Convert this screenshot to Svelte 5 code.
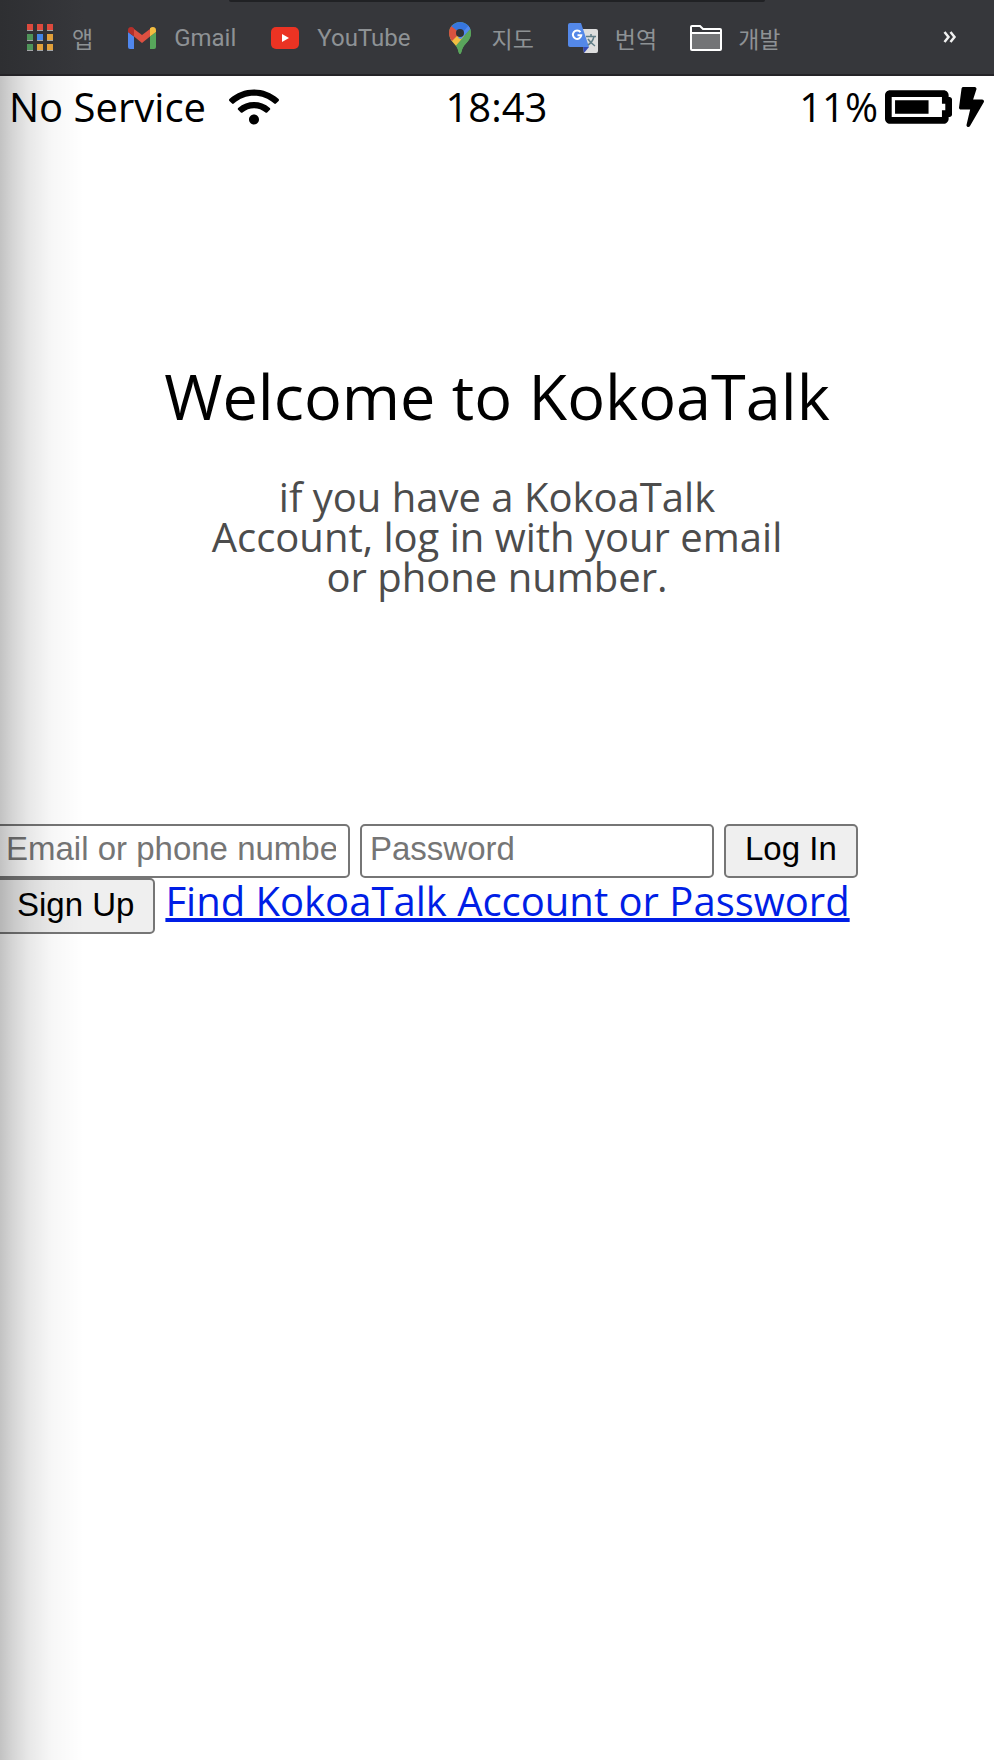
<script>
  let account = $state('');
  let password = $state('');
  const dots = [
    [0, 0, '#dc4a3d'], [10, 0, '#dc4a3d'], [20, 0, '#dc4a3d'],
    [0, 10, '#4f9459'], [10, 10, '#4386e8'], [20, 10, '#e2a03a'],
    [0, 20, '#4f9459'], [10, 20, '#e2a03a'], [20, 20, '#e2a03a']
  ];
</script>

<div class="screen">
  <nav class="bookmarks" aria-label="Bookmarks">
    <span class="tab-edge"></span>
    <a href="#apps">
      <svg viewBox="0 0 32 32" aria-hidden="true">
        {#each dots as [x, y, color]}
          <rect x={x + 3} y={y + 2} width="6" height="7" fill="#a3a5a8" />
          <rect x={x + 3} y={y + 2} width="6" height="6" fill={color} />
        {/each}
      </svg>
      <span class="ko">앱</span>
    </a>
    <a href="#gmail">
      <svg viewBox="0 0 32 32" aria-hidden="true">
        <path fill="#5087ee" d="M2 10 8 14.500V27H4a2 2 0 0 1-2-2z" />
        <path fill="#57a65b" d="M24 14.500 30 10V25a2 2 0 0 1-2 2h-4z" />
        <path fill="#dc5041" d="M8 7 16 13 24 7V14.500L16 21 8 14.500z" />
        <path fill="#b5302b" d="M2 10V8.200C2 5 5.500 4 8 6.200V14.500z" />
        <path fill="#f4bd40" d="M24 6.200C26.500 4 30 5 30 8.200V10l-6 4.500z" />
      </svg>
      <span>Gmail</span>
    </a>
    <a href="#youtube">
      <svg viewBox="0 0 32 32" aria-hidden="true">
        <rect x="2" y="5" width="28" height="22" rx="5" fill="#eb3323" />
        <path d="M13 12v8l7-4z" fill="#fff" />
      </svg>
      <span>YouTube</span>
    </a>
    <a href="#maps">
      <svg viewBox="0 0 32 32" aria-hidden="true">
        <clipPath id="pin"><path d="M16 0C9.500 0 5 5 5 11c0 7 5.500 10 8 14.500 1.500 2.500 1.500 6.500 3 6.500s1.500-4 3-6.500C21.500 21 27 18 27 11 27 5 22.500 0 16 0z" /></clipPath>
        <g clip-path="url(#pin)">
          <rect width="32" height="32" fill="#5aa55c" />
          <path d="M0 24 16 5l5 9L9 28z" fill="#f2bd42" />
          <path d="M0 0 8 3l8 8L7 20 0 16z" fill="#d9523f" />
          <path d="M7 4 16-3h16v7L16 17V11z" fill="#3776df" />
          <path d="M25 3 14 16l3 1L32 1z" fill="#5389ee" />
          <path d="M27 6 10 26l2 6h16V6z" fill="#5aa55c" />
          <circle cx="16" cy="11" r="4" fill="#303236" />
        </g>
      </svg>
      <span class="ko">지도</span>
    </a>
    <a href="#translate">
      <svg viewBox="0 0 32 32" aria-hidden="true">
        <path d="M14 7h15a2 2 0 0 1 2 2v20a2 2 0 0 1-2 2H17z" fill="#dedede" />
        <path d="m16 25 6 0-5 6z" fill="#3449b5" />
        <path d="M3 1h11l8 24H3a2 2 0 0 1-2-2V3a2 2 0 0 1 2-2z" fill="#5488e8" />
        <path d="M13.500 10.200a4.200 4.200 0 1 0 .8 3H10.500" fill="none" stroke="#fff" stroke-width="2" />
        <path d="M19 14.500h10M24 12v2.500M27 14.500c-1 4-3.500 7-6 8.500M21 17c2 3 4 5 7 7" fill="none" stroke="#607d87" stroke-width="1.500" />
      </svg>
      <span class="ko">번역</span>
    </a>
    <a href="#dev">
      <svg viewBox="0 0 32 32" aria-hidden="true">
        <path d="M1 5a1 1 0 0 1 1-1h8l3 3h17a1 1 0 0 1 1 1v19a1 1 0 0 1-1 1H2a1 1 0 0 1-1-1z" fill="#36373b" />
        <path d="M1 11h30v16H1z" fill="#737476" />
        <path d="M1 5a1 1 0 0 1 1-1h8l3 3h17a1 1 0 0 1 1 1v19a1 1 0 0 1-1 1H2a1 1 0 0 1-1-1zM1 11h30" fill="none" stroke="#fff" stroke-width="2" />
      </svg>
      <span class="ko">개발</span>
    </a>
    <button class="more" aria-label="More bookmarks">
      <svg viewBox="0 0 14 14" aria-hidden="true"><path d="m1.500 2 4 5-4 5m6-10 4 5-4 5" fill="none" stroke="#f1f1f1" stroke-width="2.500" /></svg>
    </button>
  </nav>

  <header class="status">
    <div class="network">
      <span>No Service</span>
      <svg class="wifi" viewBox="0 0 640 512" aria-hidden="true"><path d="M634.91 154.88C457.74-8.99 182.19-8.93 5.09 154.88c-6.66 6.16-6.79 16.59-.35 22.98l34.24 33.97c6.14 6.1 16.02 6.23 22.4.38 145.92-133.68 371.3-133.71 517.25 0 6.38 5.85 16.26 5.71 22.4-.38l34.24-33.97c6.43-6.39 6.3-16.82-.36-22.98zM320 352c-35.35 0-64 28.65-64 64s28.65 64 64 64 64-28.65 64-64-28.65-64-64-64zm202.67-83.59c-115.26-101.93-290.21-101.82-405.34 0-6.9 6.1-7.12 16.69-.57 23.15l34.44 33.99c6 5.92 15.66 6.32 22.05.8 83.95-72.57 209.74-72.41 293.49 0 6.39 5.52 16.05 5.13 22.05-.8l34.44-33.99c6.56-6.46 6.33-17.06-.56-23.15z" /></svg>
    </div>
    <span>18:43</span>
    <div class="power">
      <span>11%</span>
      <svg class="battery" viewBox="0 96 640 320" aria-hidden="true"><path d="M544 160v64h32v64h-32v64H64V160h480m16-64H48c-26.510 0-48 21.490-48 48v224c0 26.510 21.490 48 48 48h512c26.510 0 48-21.490 48-48v-16h8c13.255 0 24-10.745 24-24V184c0-13.255-10.745-24-24-24h-8v-16c0-26.510-21.490-48-48-48zM416 192H96v128h320z" /></svg>
      <svg class="bolt" viewBox="0 0 320 512" aria-hidden="true"><path d="M296 160H180.600l42.600-129.800C227.200 15 215.700 0 200 0H56C44 0 33.800 8.900 32.200 20.800l-32 240C-1.700 275.200 9.500 288 24 288h118.700L96.600 482.500c-3.600 15.200 8 29.500 23.300 29.500 8.400 0 16.400-4.400 20.800-12l176-304c9.300-15.900-2.200-36-20.700-36z" /></svg>
    </div>
  </header>

  <main>
    <section class="welcome">
      <h1>Welcome to KokoaTalk</h1>
      <p>if you have a KokoaTalk Account, log in with your email or phone number.</p>
    </section>
    <form onsubmit={(e) => e.preventDefault()}>
      <div class="row">
        <input type="text" bind:value={account} placeholder="Email or phone number" aria-label="Email or phone number" />
        <input type="password" bind:value={password} placeholder="Password" aria-label="Password" />
        <button type="submit">Log In</button>
      </div>
      <div class="row">
        <button type="button" class="signup">Sign Up</button>
        <a href="#find">Find KokoaTalk Account or Password</a>
      </div>
    </form>
  </main>
</div>

<style>
  :global(body) { margin: 0; background: #fff; }
  * { box-sizing: border-box; }
  .screen {
    position: relative;
    min-height: 100vh;
    overflow: hidden;
    color: #000;
    font: 40px/40px "Open Sans", sans-serif;
  }
  .screen::after {
    content: "";
    position: absolute;
    inset: 76px auto 0 0;
    width: 84px;
    pointer-events: none;
    background: linear-gradient(90deg, rgba(0,0,0,.24), rgba(0,0,0,.16) 16%, rgba(0,0,0,.09) 35%, rgba(0,0,0,.03) 62%, transparent);
  }
  svg { display: block; flex: none; }
  .bookmarks {
    position: relative;
    display: flex;
    align-items: center;
    gap: 33px;
    height: 76px;
    padding: 0 37px 0 24px;
    border-bottom: 2px solid #242327;
    background: linear-gradient(90deg, #2e2f32, #36373b 84px);
    font: 24px/32px Roboto, sans-serif;
  }
  .tab-edge {
    position: absolute;
    top: 0;
    left: 23%;
    right: 23%;
    height: 2px;
    border-radius: 0 0 8px 8px;
    background: #202124;
  }
  .bookmarks a {
    display: flex;
    align-items: center;
    gap: 16px;
    padding-top: 1px;
    color: #8e9295;
    text-decoration: none;
    white-space: nowrap;
  }
  .bookmarks a svg { width: 32px; height: 32px; }
  .ko { font: 23px/32px "Noto Sans CJK KR", sans-serif; }
  .bookmarks .more { margin-left: auto; padding: 0; border: 0; background: none; }
  .more svg { width: 14px; height: 14px; }
  .status {
    display: grid;
    grid-template-columns: 1fr auto 1fr;
    align-items: center;
    padding: 11px 10px 0 9px;
  }
  .network, .power { display: flex; align-items: center; }
  .network { gap: 23px; }
  .power { justify-content: flex-end; gap: 7px; }
  .wifi { width: 50px; height: 40px; }
  .battery { width: 67px; height: 34px; }
  .bolt { width: 25px; height: 40px; }
  .welcome {
    display: flex;
    flex-direction: column;
    align-items: center;
    gap: 49px;
    margin: 237px 0 227px;
    text-align: center;
  }
  h1 { margin: 0; font-size: 63px; line-height: 64px; font-weight: 400; }
  p { margin: 0; width: 60%; color: #4c4c4c; }
  form { margin-left: -4px; }
  .row { display: flex; flex-wrap: wrap; align-items: flex-start; column-gap: 10px; }
  input, .row button {
    height: 54px;
    margin: 0;
    border: 2px solid #767676;
    border-radius: 5px;
    font: 33px/38px "Liberation Sans", Arial, sans-serif;
  }
  input { width: 354px; padding: 0 12px 4px 8px; background: #fff; color: #000; }
  input::placeholder { color: #757575; opacity: 1; }
  .row button { padding: 0 19px 4px; background: #efefef; color: #000; }
  .row .signup { height: 56px; padding-bottom: 2px; }
  .row a {
    padding-top: 3px;
    color: #001ee6;
    text-decoration: underline;
    text-decoration-skip-ink: none;
    text-decoration-thickness: 4px;
  }
</style>
